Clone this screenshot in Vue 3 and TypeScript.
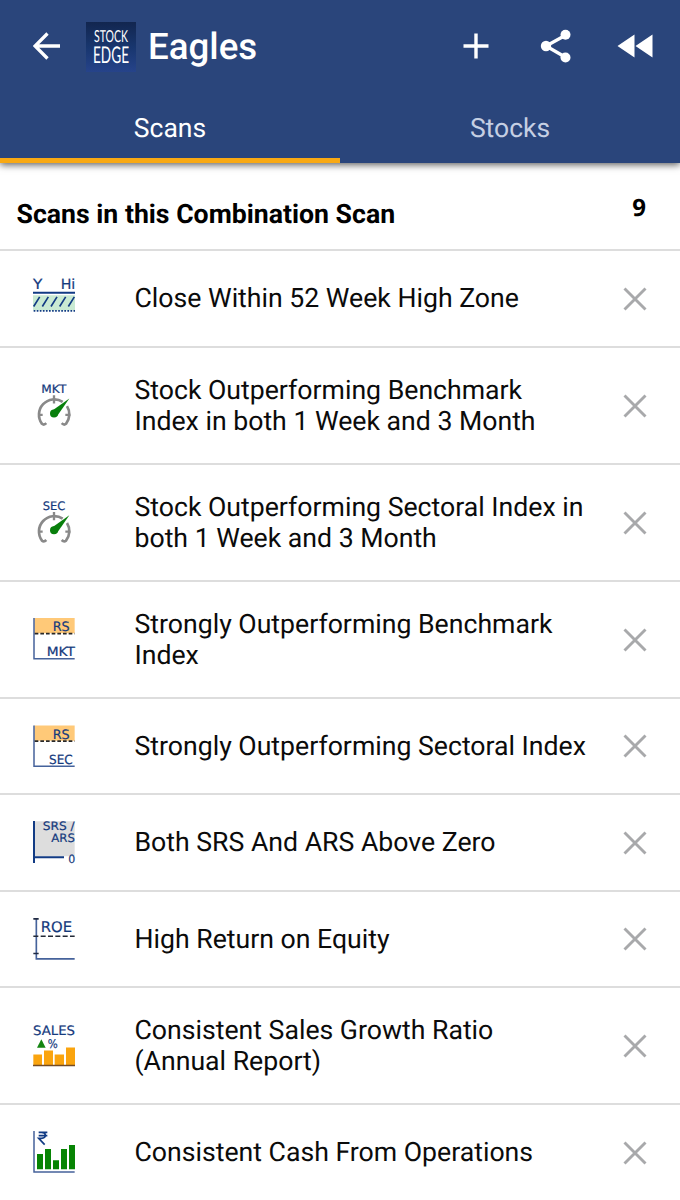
<script setup lang="ts">
interface Scan {
  icon: string
  lines: string[]
  view: string
}

const scans: Scan[] = [
  { icon: 'high', lines: ['Close Within 52 Week High Zone'], view: '12 10.5 180 180' },
  { icon: 'gauge-mkt', lines: ['Stock Outperforming Benchmark', 'Index in both 1 Week and 3 Month'], view: '12 15 180 180' },
  { icon: 'gauge-sec', lines: ['Stock Outperforming Sectoral Index in', 'both 1 Week and 3 Month'], view: '12 6 180 180' },
  { icon: 'rs-mkt', lines: ['Strongly Outperforming Benchmark', 'Index'], view: '12 12 180 180' },
  { icon: 'rs-sec', lines: ['Strongly Outperforming Sectoral Index'], view: '12 1.5 180 180' },
  { icon: 'srs', lines: ['Both SRS And ARS Above Zero'], view: '12 6 180 180' },
  { icon: 'roe', lines: ['High Return on Equity'], view: '12 10.5 180 180' },
  { icon: 'sales', lines: ['Consistent Sales Growth Ratio', '(Annual Report)'], view: '12 16.5 180 180' },
  { icon: 'cash', lines: ['Consistent Cash From Operations'], view: '12 6 180 180' },
]
</script>

<template>
  <div class="screen">
    <header class="header">
      <div class="toolbar">
        <svg class="back" viewBox="0 0 28 28"><path d="M27 14H3M14.500 1.500 2 14l12.500 12.500" fill="none" stroke="#fff" stroke-width="3.300" /></svg>
        <svg class="logo" viewBox="0 0 50 50">
          <defs>
            <linearGradient id="logo-bg" x1="0" y1="0" x2="0" y2="1">
              <stop offset="0" stop-color="#12264f" />
              <stop offset="0.500" stop-color="#18366e" />
              <stop offset="1" stop-color="#26438a" />
            </linearGradient>
          </defs>
          <rect width="50" height="50" fill="url(#logo-bg)" />
          <text x="8" y="19.500" font-size="16.500" textLength="34" lengthAdjust="spacingAndGlyphs">STOCK</text>
          <text x="7" y="41" font-size="23" textLength="36" lengthAdjust="spacingAndGlyphs">EDGE</text>
        </svg>
        <h1>Eagles</h1>
        <div class="actions">
          <svg class="plus" viewBox="0 0 26 26"><path d="M13 .5v25M.5 13h25" stroke="#fff" stroke-width="3.400" /></svg>
          <svg class="share" viewBox="0 0 32 34">
            <path d="M26 6 6 17l20 11.500" fill="none" stroke="#fff" stroke-width="3.300" />
            <g fill="#fff"><circle cx="25.500" cy="5.700" r="5" /><circle cx="6" cy="17" r="5.200" /><circle cx="25.500" cy="28.500" r="5" /></g>
          </svg>
          <svg class="rewind" viewBox="0 0 36 24"><path d="M17.500.5v23L.5 12zM35.500.5v23l-17-11.500z" fill="#fff" /></svg>
        </div>
      </div>
      <nav class="tabs">
        <button class="tab active">Scans</button>
        <button class="tab">Stocks</button>
      </nav>
    </header>
    <main>
      <div class="summary"><h2>Scans in this Combination Scan</h2><span class="count">9</span></div>
      <ul>
        <li v-for="scan in scans" :key="scan.icon" :class="{ tall: scan.lines.length > 1 }">
          <svg class="icon" :viewBox="scan.view">
            <template v-if="scan.icon === 'high'">
              <text x="39" y="72" font-size="42" textLength="28" lengthAdjust="spacingAndGlyphs">Y</text>
              <text x="122" y="72" font-size="42" textLength="44" lengthAdjust="spacingAndGlyphs">Hi</text>
              <path d="M39 92h126v46H39z" fill="#c9ead3" />
              <path d="M39 85h126" class="navy" stroke-width="6" />
              <path d="m41 126 18-29m8 29 18-29m8 29 18-29m8 29 18-29m8 29 18-29" class="navy" stroke-width="5" />
              <path d="M41 139h124" class="navy" stroke-width="5" stroke-dasharray="5 4.200" />
            </template>
            <template v-else-if="scan.icon.startsWith('gauge')">
              <text :x="scan.icon === 'gauge-mkt' ? 64 : 68" :y="scan.icon === 'gauge-mkt' ? 68 : 59" font-size="35" :textLength="scan.icon === 'gauge-mkt' ? 75 : 68" lengthAdjust="spacingAndGlyphs">{{ scan.icon === 'gauge-mkt' ? 'MKT' : 'SEC' }}</text>
              <g :transform="scan.icon === 'gauge-mkt' ? 'translate(0 9.500)' : undefined">
                <path d="M79 150q-7 7-13 2A46 46 0 0 1 128 86M141 99a46 46 0 0 1-3 53q-6 5-13-2" fill="none" stroke="#898989" stroke-width="8" />
                <path d="M102 66v25M54 125h14M136 125h15" stroke="#898989" stroke-width="7" />
                <path d="m94 114 54-38-37 53z" fill="#087f0c" />
                <circle cx="102" cy="121" r="12" fill="#087f0c" />
              </g>
            </template>
            <template v-else-if="scan.icon.startsWith('rs')">
              <g :transform="scan.icon === 'rs-sec' ? 'translate(0 -9)' : undefined">
                <path d="M43 39h121v46H43z" fill="#ffc978" />
                <path d="M42 39v122h122" class="axis" fill="none" stroke-width="4.500" />
                <path d="M44 86h120" stroke="#292827" stroke-width="5" stroke-dasharray="11 6" />
                <text x="98" y="78" font-size="39" textLength="51" lengthAdjust="spacingAndGlyphs">RS</text>
                <text v-if="scan.icon === 'rs-mkt'" x="80" y="152" font-size="38" textLength="85" lengthAdjust="spacingAndGlyphs">MKT</text>
                <text v-else x="87" y="153" font-size="38" textLength="71" lengthAdjust="spacingAndGlyphs">SEC</text>
              </g>
            </template>
            <template v-else-if="scan.icon === 'srs'">
              <path d="M43 34h121v105H43z" fill="#ddd" />
              <path d="M42 33v126M44 142h88" class="navy" stroke-width="6" />
              <text x="68" y="60" font-size="35" textLength="96" lengthAdjust="spacingAndGlyphs">SRS /</text>
              <text x="94" y="96" font-size="35" textLength="71" lengthAdjust="spacingAndGlyphs">ARS</text>
              <text x="145" y="158" font-size="34" textLength="21" lengthAdjust="spacingAndGlyphs">0</text>
            </template>
            <template v-else-if="scan.icon === 'roe'">
              <path d="M49 40v120h115" class="axis" fill="none" stroke-width="5" />
              <path d="M40 40h16M40 144h16" stroke="#202a43" stroke-width="5" />
              <path d="M40 92h124" stroke="#222936" stroke-width="4.500" stroke-dasharray="15 7" />
              <text x="62" y="80" font-size="44" textLength="94" lengthAdjust="spacingAndGlyphs">ROE</text>
            </template>
            <template v-else-if="scan.icon === 'sales'">
              <text x="39" y="72" font-size="39" textLength="126" lengthAdjust="spacingAndGlyphs">SALES</text>
              <path d="m51 112 13-26 13 26z" fill="#148512" />
              <text x="83" y="112" font-size="36" textLength="30" lengthAdjust="spacingAndGlyphs">%</text>
              <path d="M40 165v-33h26v33zM72 165v-45h27v45zM104 165v-33h28v33zM138 165v-54h27v54z" fill="#faa40e" />
              <path d="M39 165h126" stroke="#744b24" stroke-width="5" />
            </template>
            <template v-else>
              <path d="M42 33v123h122" class="axis" fill="none" stroke-width="4.500" />
              <path d="M56 37h26M56 47h26M56 37h8q12 0 12 9t-12 9h-8l18 19" class="navy" fill="none" stroke-width="5" />
              <path d="M51 148v-46h18v46zM75 148V87h18v61zM99 148v-27h18v27zM123 148V87h18v61zM147 148V75h18v73z" fill="#078404" />
            </template>
          </svg>
          <div class="name"><div v-for="line in scan.lines" :key="line">{{ line }}</div></div>
          <svg class="remove" viewBox="0 0 24 24"><path d="m1.500 1.500 21 21m0-21-21 21" stroke="#a8a9ab" stroke-width="2.900" /></svg>
        </li>
      </ul>
    </main>
  </div>
</template>

<style>
body { background: #fff; }
</style>

<style scoped>
* { box-sizing: border-box; }
.screen { width: 680px; height: 1200px; overflow: hidden; background: #fff; color: #0b0b0b; font-family: Roboto, sans-serif; text-rendering: geometricPrecision; }
svg { display: block; flex: none; }
.header { position: relative; height: 163px; background: #2a457b; box-shadow: 0 2px 7px rgba(0, 0, 0, .62); }
.toolbar { display: flex; align-items: center; height: 92px; padding: 0 27px 0 33px; }
.back { width: 28px; height: 28px; }
.logo { width: 50px; height: 50px; margin: 2px 0 0 25px; overflow: visible; }
.logo text { fill: #fff; font-family: Lato, sans-serif; }
h1 { margin: 2px 0 0 12px; color: #fff; font-size: 36.700px; font-weight: 500; line-height: 44px; }
.actions { display: flex; align-items: center; margin-left: auto; }
.plus { width: 26px; height: 26px; margin-right: 51px; }
.share { width: 32px; height: 34px; margin-right: 45px; }
.rewind { width: 36px; height: 24px; }
.tabs { display: flex; height: 71px; }
.tab { flex: 1; margin: 0; padding: 8px 0 0; border: 0; border-bottom: 5px solid transparent; background: none; color: #c5cfe3; font: 400 26.500px/58px Roboto, sans-serif; text-rendering: inherit; }
.active { border-color: #f9a913; color: #fff; }
.summary { display: flex; justify-content: space-between; height: 88px; padding: 34px 34px 0 16.500px; border-bottom: 2px solid #ddd; }
h2 { margin: 0; color: #000; font-size: 26.650px; font-weight: 700; line-height: 34px; }
.count { margin-top: -6px; color: #000; font: 700 24px/34px "Noto Sans", sans-serif; }
ul { margin: 0; padding: 0; list-style: none; }
li { display: flex; align-items: center; height: 96.500px; padding: 0 33.500px 0 24px; border-bottom: 2px solid #ddd; }
.tall { height: 117px; }
.icon { width: 60px; height: 60px; }
.icon text { fill: #153a7d; stroke: #153a7d; stroke-width: .6; font-family: "DejaVu Sans", sans-serif; }
.navy { stroke: #123b84; }
.axis { stroke: #45629b; }
.name { flex: 1; margin: 1px 0 0 50.500px; font-size: 26.650px; line-height: 31px; white-space: nowrap; }
.remove { width: 24px; height: 24px; margin-top: 1px; }
</style>
